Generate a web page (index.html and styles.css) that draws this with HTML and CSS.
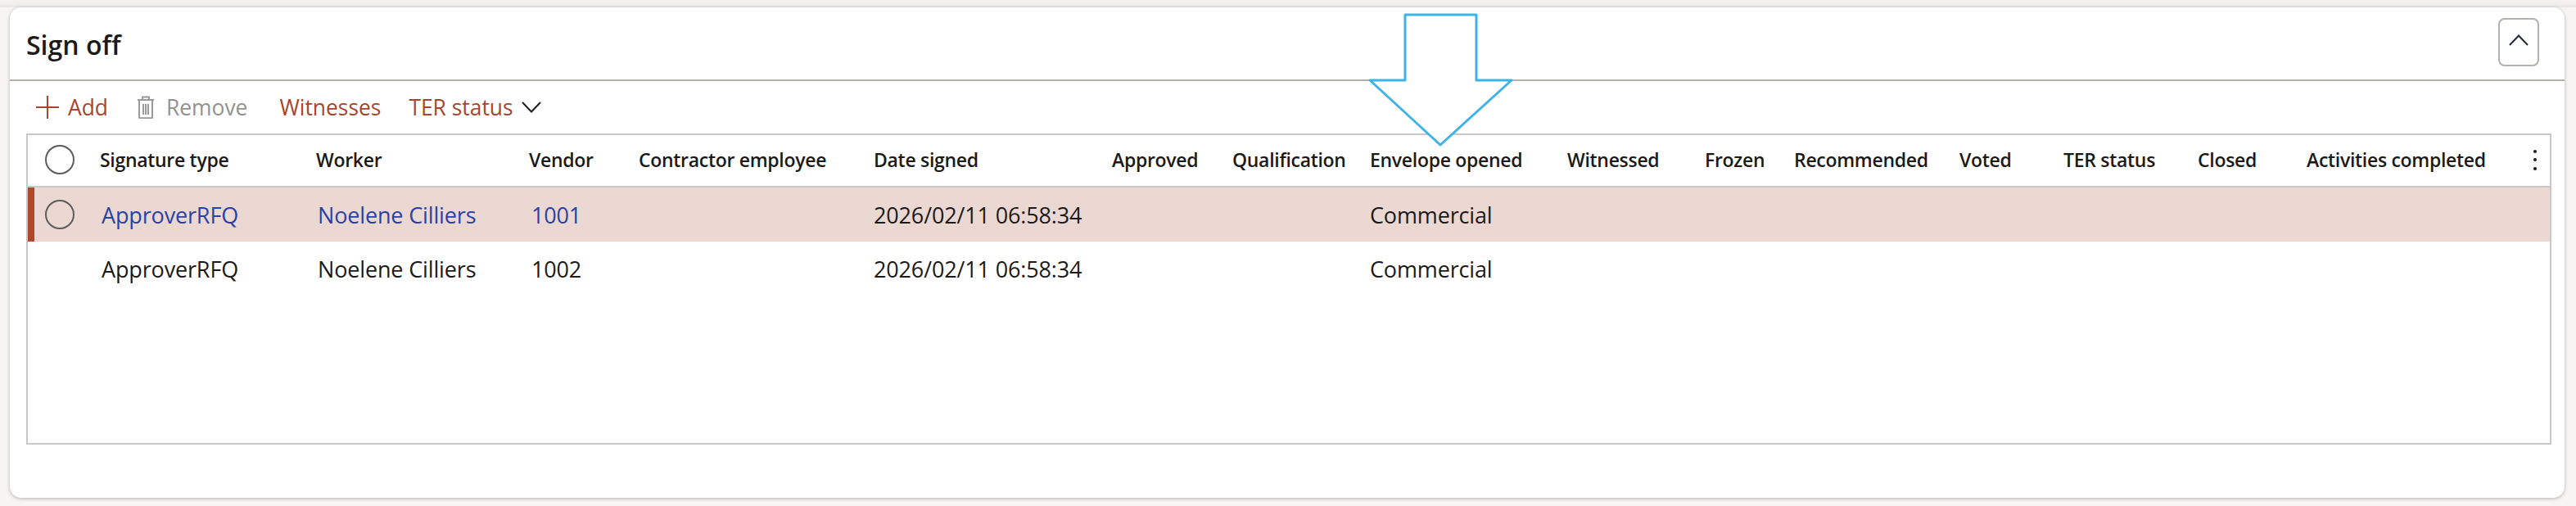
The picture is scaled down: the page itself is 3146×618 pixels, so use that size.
FILE: index.html
```html
<!DOCTYPE html>
<html lang="en">
<head>
<meta charset="utf-8">
<title>Sign off</title>
<link rel="stylesheet" href="styles.css">
</head>
<body>
<div class="topstrip"></div>
<section class="card">
  <header class="card-head">
    <h2 class="title">Sign off</h2>
    <button class="collapse" aria-label="Collapse"><svg width="24" height="14" viewBox="0 0 24 14"><path d="M1 13 12 1.5 23 13" fill="none" stroke="#1f2a38" stroke-width="2"/></svg></button>
  </header>
  <div class="toolbar">
    <span class="tool add"><svg width="28" height="28" viewBox="0 0 28 28"><path d="M14 0v28M0 14h28" stroke="#a8452d" stroke-width="2" fill="none"/></svg>Add</span>
    <span class="tool remove"><svg width="22" height="28" viewBox="0 0 22 28"><path d="M1 5h20M7 5V1.5h8V5M3 5v21.5a.8.8 0 0 0 .8.8h14.4a.8.8 0 0 0 .8-.8V5M8 10v13M11 10v13M14 10v13" fill="none" stroke="#9a9a98" stroke-width="2"/></svg>Remove</span>
    <span class="tool wit">Witnesses</span>
    <span class="tool ter">TER status<svg width="24" height="14" viewBox="0 0 24 14"><path d="M1 1 12 12.5 23 1" fill="none" stroke="#1f1f1f" stroke-width="2"/></svg></span>
  </div>
  <div class="grid">
    <div class="row head">
      <span class="sel"><i class="radio"></i></span>
      <span>Signature type</span><span>Worker</span><span>Vendor</span><span>Contractor employee</span><span>Date signed</span><span>Approved</span><span>Qualification</span><span>Envelope opened</span><span>Witnessed</span><span>Frozen</span><span>Recommended</span><span>Voted</span><span>TER status</span><span>Closed</span><span>Activities completed</span>
      <span class="dots"><b></b><b></b><b></b></span>
    </div>
    <div class="row body active">
      <span class="sel"><i class="radio"></i></span>
      <a class="link">ApproverRFQ</a><a class="link">Noelene Cilliers</a><a class="link">1001</a><span></span><span>2026/02/11 06:58:34</span><span></span><span></span><span>Commercial</span>
    </div>
    <div class="row body">
      <span class="sel"></span>
      <span>ApproverRFQ</span><span>Noelene Cilliers</span><span>1002</span><span></span><span>2026/02/11 06:58:34</span><span></span><span></span><span>Commercial</span>
    </div>
  </div>
</section>
<svg class="arrow" width="185" height="170" viewBox="1670 15 185 170"><path d="M1716 18H1803V98H1846L1759 177 1673 98H1716Z" fill="#fff" stroke="#3fb3e6" stroke-width="3" stroke-linejoin="round"/></svg>
</body>
</html>
```
FILE: styles.css
```css
* { box-sizing: border-box; }
html, body { margin: 0; height: 100%; }
body {
  position: relative;
  width: 3146px;
  height: 618px;
  overflow: hidden;
  background: #f6f5f3;
  font-family: "Open Sans", "Noto Sans", sans-serif;
  color: #1b1a19;
  padding: 9px 14px 10px 12px;
}
.topstrip {
  position: absolute;
  left: 0; right: 0; top: 0;
  height: 9px;
  background: linear-gradient(#f4f3f1 0, #f0efee 5px, #e6e6e5 9px);
}
.card {
  position: relative;
  height: 599px;
  background: #fff;
  border-radius: 14px;
  box-shadow: 0 1px 4px rgba(0,0,0,.28);
  display: flex;
  flex-direction: column;
}
.card-head {
  height: 90px;
  flex: none;
  border-bottom: 2px solid #b3b2ae;
  display: flex;
  align-items: flex-start;
  justify-content: space-between;
  padding: 13px 31px 0 20px;
}
.title {
  margin: 12px 0 0;
  font-size: 32px;
  line-height: 42px;
  font-weight: 600;
}
.collapse {
  width: 50px;
  height: 59px;
  padding: 0 0 6px;
  background: #fff;
  border: 2px solid #b3b2ae;
  border-radius: 8px;
  display: flex;
  align-items: center;
  justify-content: center;
}
.toolbar {
  height: 64px;
  flex: none;
  display: flex;
  align-items: center;
  padding: 0 0 0 32px;
  font-size: 26.4px;
  color: #a8452d;
}
.tool { display: inline-flex; align-items: center; white-space: nowrap; }
.add svg { margin-right: 11px; }
.remove { margin-left: 35px; color: #929290; }
.remove svg { margin-right: 14px; }
.wit { margin-left: 39px; }
.ter { margin-left: 34px; }
.ter svg { margin-left: 10px; }
.grid {
  flex: none;
  margin-left: 20px;
  width: 3084px;
  height: 380px;
  border: 2px solid #c8c8c8;
}
.row {
  display: grid;
  grid-template-columns: 88px 264px 260px 134px 287px 291px 147px 168px 241px 168px 109px 202px 127px 164px 133px 279px 1fr;
  align-items: center;
  white-space: nowrap;
}
.row > * { min-width: 0; }
.head {
  height: 64px;
  font-size: 23px;
  font-weight: 600;
  letter-spacing: -.3px;
  border-bottom: 2px solid #c8c8c8;
  padding-bottom: 2px;
}
.head .sel { margin-bottom: 1px; }
.body {
  height: 66px;
  font-size: 27px;
  letter-spacing: -.15px;
}
.body > :nth-child(2) { padding-left: 2px; }
.body > :nth-child(3) { padding-left: 2px; }
.body > :nth-child(4) { padding-left: 3px; }
.active {
  background: #ecd8d2;
  border-left: 8px solid #b0482a;
  grid-template-columns: 80px 264px 260px 134px 287px 291px 147px 168px 241px 168px 109px 202px 127px 164px 133px 279px 1fr;
}
.active .sel { margin-left: -8px; }
.link { color: #2a43a3; }
.sel { display: flex; justify-content: flex-start; padding-left: 21px; }
.radio {
  display: block;
  width: 36px;
  height: 36px;
  border: 2px solid #5c5c5c;
  border-radius: 50%;
}
.dots {
  display: flex;
  flex-direction: column;
  align-items: center;
  gap: 6.5px;
  width: 6px;
  margin-left: -3px;
}
.dots b { width: 4px; height: 4px; border-radius: 50%; background: #1b1a19; }
.arrow { position: absolute; left: 1670px; top: 15px; }
```
